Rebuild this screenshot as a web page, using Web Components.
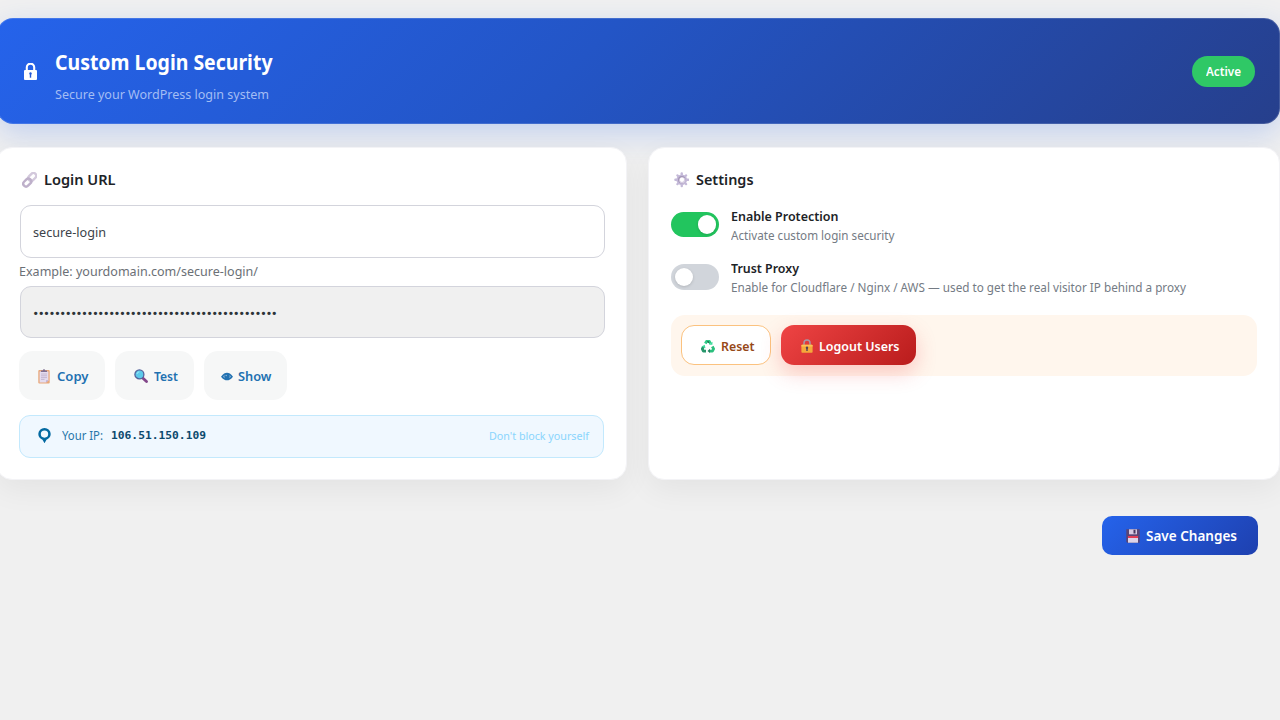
<!DOCTYPE html>
<html lang="en">
<head>
<meta charset="utf-8">
<title>Custom Login Security</title>
<style>
html,body{margin:0;height:100%;overflow:hidden;background:#f0f0f0}
body{font-family:"Noto Sans","Open Sans",sans-serif;color:#1d2327}
</style>
</head>
<body>
<login-app></login-app>
<script>
const define=(name,html,setup)=>{
  const t=document.createElement('template');t.innerHTML=html;
  customElements.define(name,class extends HTMLElement{
    constructor(){super();this.attachShadow({mode:'open'}).append(t.content.cloneNode(true));}
    connectedCallback(){setup&&setup(this,this.shadowRoot);}
  });
};

/* One line of text, condensed horizontally to a set width. */
define('fit-text',`<style>
:host{display:block;flex:none;white-space:nowrap;line-height:20px;height:20px}
span{display:inline-block;transform-origin:0 50%}
</style><span><slot></slot></span>`,(el,root)=>{
  const w=+el.getAttribute('w'),s=root.querySelector('span');
  el.style.width=w+'px';
  el.style.fontSize=(el.getAttribute('size')||13)+'px';
  el.style.fontWeight=el.getAttribute('weight')||400;
  const n=s.getBoundingClientRect().width;
  if(n)s.style.transform=`scaleX(${w/n})`;
});

const icons={
lock:['0 0 13 17','<path d="M2.8 8V4.3a3.7 3.7 0 0 1 7.4 0V8" fill="none" stroke="#fff" stroke-width="2.1"/><rect y="7" width="13" height="10" rx="1" fill="#fff"/><circle cx="6.5" cy="10.4" r="1.2" fill="#2459d6"/><path d="M5.8 11h1.4v3.7H5.8z" fill="#2459d6"/>'],
link:['0 0 16 16','<g fill="none" stroke-width="2.5"><rect x="6" y="2.2" width="9.2" height="5.8" rx="2.900" transform="rotate(-45 10.6 5.100)" stroke="#d3c9dc"/><rect x=".8" y="8" width="9.200" height="5.800" rx="2.900" transform="rotate(-45 5.400 10.900)" stroke="#beb0ca"/></g>'],
gear:['0 0 16 16','<g fill="#c4b9d8"><rect x="6.800" y=".3" width="2.400" height="15.400" rx="1"/><rect x=".3" y="6.800" width="15.400" height="2.400" rx="1"/><g transform="rotate(45 8 8)"><rect x="6.800" y=".5" width="2.400" height="15" rx="1"/><rect x=".5" y="6.800" width="15" height="2.400" rx="1"/></g><circle cx="8" cy="8" r="5.500"/></g><circle cx="8" cy="8" r="3.800" fill="#a294b5"/><circle cx="8.500" cy="8.500" r="3.200" fill="#d6cde2"/><circle cx="8.200" cy="8" r="2.200" fill="#fff"/>'],
copy:['0 0 12 15','<rect x=".3" y="1" width="11.4" height="13.5" rx="1" fill="#e9a779"/><path d="M1.6 2.4h8.8v8.8l-2.2 2.2H1.6z" fill="#e4dcef"/><path d="M10.4 11.2H8.2v2.2z" fill="#b9a8ce"/><path d="M3 2.9V1.4h1.8a1.2 1.2 0 0 1 2.4 0H9v1.5z" fill="#806f91"/><path d="M3 5h6M3 6.8h6M3 8.6h6M3 10.4h3.5" stroke="#bcafc9" stroke-width=".8"/>'],
search:['0 0 14 14','<path d="M8.7 8.9l3.8 3.6" stroke="#83478a" stroke-width="2.8" stroke-linecap="round"/><circle cx="5.4" cy="5.4" r="4.5" fill="#5cc9ea" stroke="#53629b" stroke-width="1.3"/><path d="M3 5a2.6 2.6 0 0 1 2.3-2.2" fill="none" stroke="#8de3f6" stroke-width="1.2"/>'],
eye:['0 0 12 9','<path d="M0 4.7C2.4 1.4 4 .8 6 .8s3.6.6 6 3.9C9.800 7.400 8 8.300 6 8.300S2.200 7.400 0 4.700z" fill="#2271b1"/><path d="M2.200 4.600Q2.700 3.500 3.500 3 3 4.700 3.700 6.200 2.800 5.900 2.200 4.600zM9.800 4.600Q9.300 3.500 8.500 3 9 4.700 8.300 6.200 9.200 5.900 9.800 4.600z" fill="#a9c8e0"/><circle cx="5.200" cy="3.500" r=".8" fill="#86b1d5"/>'],
pin:['0 0 13 16','<path fill-rule="evenodd" d="M6.500 0a6.200 6.200 0 0 1 6.200 6.200c0 3-1.800 4.900-4.200 6L6.500 15.700l-2-3.500C2.100 11.100.3 9.200.3 6.200A6.200 6.200 0 0 1 6.500 0zm0 2.600a3.700 3.700 0 1 0 0 7.400 3.700 3.700 0 0 0 0-7.400z" fill="#0369a1"/>'],
recycle:['0 0 14 13','<g stroke-linejoin="round"><path d="M4.300 3.600L5.700 1.300h2.500l1.300 2.200" fill="none" stroke="#2fcb86" stroke-width="2.800"/><path d="M7.800 4.800l3.600-.1.100-3z" fill="#3cdd9b"/><path d="M11.300 6.500l1.300 2.400-1.200 2.200H8.500" fill="none" stroke="#2bbf7d" stroke-width="2.800"/><path d="M9 8.800v4.200L6.500 11z" fill="#22805f"/><path d="M5 11.100H2.400L1.300 8.900l1.200-2.200" fill="none" stroke="#26966a" stroke-width="2.800"/><path d="M.5 6.500L3.700 4.700l.8 3.600z" fill="#3cdd9b"/><path d="M5.700 1.200h2.100l.8 1.200-1.300.7z" fill="#24634e"/></g>'],
goldlock:['0 0 12 14','<path d="M3 7V4a3 3 0 0 1 6 0v3" fill="none" stroke="#a698a7" stroke-width="1.500"/><rect x=".4" y="5.700" width="11.200" height="8" rx=".8" fill="#f5a83b"/><path d="M.4 6.500q0-.8.8-.8h9.600q.8 0 .8.800v1H.4z" fill="#ffc153"/><circle cx="6" cy="8.800" r="1.200" fill="#534057"/><path d="M5.300 9h1.400v3H5.300z" fill="#534057"/>'],
save:['0 0 14 14','<path d="M.3.300h13.400v13.400H1.300l-1-1z" fill="#594574"/><rect x="3" y=".3" width="8" height="5" fill="#d6cae1"/><rect x="7.500" y=".8" width="2" height="3.700" fill="#46365f"/><path d="M2 7.200h10v6.500H2z" fill="#ddd4e9"/><path d="M2 7h10v2H2z" fill="#e33d55"/>']
};
define('app-icon','<style>:host{display:block;flex:none}svg{display:block;width:100%;height:100%}</style><div style="width:100%;height:100%"></div>',(el,root)=>{
  const [box,body]=icons[el.getAttribute('name')];
  el.style.width=el.getAttribute('w')+'px';el.style.height=el.getAttribute('h')+'px';
  root.querySelector('div').innerHTML=`<svg viewBox="${box}" preserveAspectRatio="none">${body}</svg>`;
});

define('page-banner',`<style>
:host{display:flex;box-sizing:border-box;height:105.500px;padding:0 24px 0 26px;border-radius:16px;border:1px solid rgba(255,255,255,.14);background:linear-gradient(135deg,#2563eb,#2355c6 45%,#263f8c) border-box;box-shadow:0 10px 30px rgba(37,99,235,.22);color:#fff}
app-icon{margin:43.500px 18px 0 0}
.t{margin-top:33px}.s{margin-top:12px;color:#a3bdf4}
.pill{margin:36.200px 0 0 auto;width:63px;height:31.300px;box-sizing:border-box;border-radius:16px;background:#2fc866;padding:6.400px 0 0 14px}
</style><app-icon name="lock" w="13" h="17"></app-icon>
<div><fit-text class="t" w="217.500" size="20.500" weight="700">Custom Login Security</fit-text><fit-text class="s" w="214" size="13">Secure your WordPress login system</fit-text></div>
<div class="pill"><fit-text w="35" size="12" weight="600">Active</fit-text></div>`);

define('panel-card',`<style>
:host{display:block;box-sizing:border-box;height:333px;border:1px solid #f3f3f6;border-radius:16px;background:#fff;box-shadow:0 10px 30px rgba(0,0,0,.055)}
.head{display:flex;height:20px;margin:20.700px 0 16.400px}
::slotted([slot=icon]){margin:3px 7px 0 2.500px}
</style><div class="head"><slot name="icon"></slot><slot name="title"></slot></div><slot></slot>`);

define('text-field',`<style>
:host{display:block;box-sizing:border-box;height:52.500px;border:1px solid #d3d4dc;border-radius:11px;padding:16px 0 0 12.500px;color:#3c434a;background:#fff;margin:0 -.500px 0 .500px}
:host([readonly]){background:#f0f0f0;color:#2c3338}
</style><slot></slot>`);

define('soft-button',`<style>
:host{display:flex;box-sizing:border-box;height:49.500px;border-radius:14px;background:#f6f7f7;color:#2271b1;align-items:center}
::slotted(fit-text){position:relative;top:.500px}
::slotted(app-icon){position:relative;top:.500px}
</style><slot></slot>`);

define('ip-bar',`<style>
:host{display:flex;box-sizing:border-box;height:43px;border:1px solid #c3e9fd;border-radius:11px;background:#f0f8ff;color:#2775a8;padding:10.500px 14px 0 18px}
app-icon{margin:1.200px 11px 0 0}
.m{font-family:"DejaVu Sans Mono",monospace;color:#0c4a6e;margin-left:7.500px}
.n{margin-left:auto;color:#8ad5fd}
</style><app-icon name="pin" w="13" h="15.500"></app-icon><fit-text w="41" size="12.500">Your IP:</fit-text><fit-text class="m" w="95" size="11" weight="700">106.51.150.109</fit-text><fit-text class="n" w="100" size="11">Don't block yourself</fit-text>`);

define('toggle-row',`<style>
:host{display:flex;height:52.500px}
.track{flex:none;box-sizing:border-box;display:flex;width:47.500px;height:25.500px;border-radius:13px;background:#d1d5db;padding:3.500px;margin:4px 12px 0 0}
.knob{width:18.500px;height:18.500px;border-radius:50%;background:#fff;box-shadow:0 1px 3px rgba(0,0,0,.15)}
:host([on]) .track{background:#22c55e;justify-content:flex-end;padding-right:2.500px}
::slotted([slot=label]){color:#1d2327;margin-top:-1.300px}
::slotted([slot=note]){color:#747b84;margin-top:-1px}
</style><div class="track"><div class="knob"></div></div><div><slot name="label"></slot><slot name="note"></slot></div>`);

define('action-button',`<style>
:host{display:flex;box-sizing:border-box;align-items:center;height:40.500px;border-radius:13px;color:#fff}
:host([kind=reset]){background:#fff;border:1px solid #fbc27f;color:#964817}
:host([kind=danger]){background:linear-gradient(135deg,#ef4444,#b91c1c);box-shadow:0 8px 20px rgba(239,68,68,.25)}
:host([kind=save]){height:39.500px;border-radius:10px;background:linear-gradient(135deg,#2563eb,#1e40af)}
::slotted(fit-text){position:relative;top:1.500px}
::slotted(app-icon){position:relative;top:1.500px}
:host([kind=save]) ::slotted(*){top:1px}
</style><slot></slot>`);

define('login-app',`<style>
:host{display:block;box-sizing:border-box;height:720px;overflow:hidden;padding-top:18.400px}
page-banner{margin-left:-3px}
.cards{display:grid;grid-template-columns:631px 632px;column-gap:21px;margin:23.500px 0 0 -4px}
.l{padding:0 22px 0 22px}.r{padding:0 22.500px 0 22.400px}
.help{color:#6b7076;margin:3px 0 5px -.100px}
.btns{display:flex;gap:10px;margin:12.500px 0 14.500px}
.cp{width:86px;padding-left:19px}.ts{width:79px;padding-left:19px}.sh{width:83px;padding-left:17px}
.tg{margin-top:18.800px;height:107.200px}
.warn{display:flex;gap:10px;box-sizing:border-box;height:60.500px;border-radius:14px;background:#fff6ed;padding:9.500px 10px}
.foot{display:flex;justify-content:flex-end;padding:35.200px 22.500px 0 0}
</style>
<page-banner></page-banner>
<div class="cards">
<panel-card class="l"><app-icon slot="icon" name="link" w="15.500" h="15.500"></app-icon><fit-text slot="title" w="71.500" size="15" weight="600">Login URL</fit-text>
<text-field><fit-text w="73" size="13">secure-login</fit-text></text-field>
<fit-text class="help" w="239" size="12.800">Example: yourdomain.com/secure-login/</fit-text>
<text-field readonly><fit-text w="244" size="12.500" style="padding-top:.800px">•••••••••••••••••••••••••••••••••••••••••••••</fit-text></text-field>
<div class="btns">
<soft-button class="cp"><app-icon name="copy" w="12" h="15" style="margin-right:7px"></app-icon><fit-text w="31.500" weight="600">Copy</fit-text></soft-button>
<soft-button class="ts"><app-icon name="search" w="14" h="14" style="margin-right:6px"></app-icon><fit-text w="24" weight="600">Test</fit-text></soft-button>
<soft-button class="sh"><app-icon name="eye" w="12" h="9" style="margin-right:4.500px"></app-icon><fit-text w="33.500" weight="600">Show</fit-text></soft-button>
</div>
<ip-bar></ip-bar></panel-card>
<panel-card class="r"><app-icon slot="icon" name="gear" w="15.500" h="15.500"></app-icon><fit-text slot="title" w="57.500" size="15" weight="600">Settings</fit-text>
<div class="tg">
<toggle-row on><fit-text slot="label" w="107.500" size="12.500" weight="600">Enable Protection</fit-text><fit-text slot="note" w="163.500" size="12">Activate custom login security</fit-text></toggle-row>
<toggle-row><fit-text slot="label" w="68" size="12.500" weight="600">Trust Proxy</fit-text><fit-text slot="note" w="455" size="12">Enable for Cloudflare / Nginx / AWS — used to get the real visitor IP behind a proxy</fit-text></toggle-row>
</div>
<div class="warn">
<action-button kind="reset" style="width:90px;padding-left:18.500px"><app-icon name="recycle" w="14" h="13" style="margin-right:6px"></app-icon><fit-text w="33.500" weight="600">Reset</fit-text></action-button>
<action-button kind="danger" style="width:135px;padding-left:19.500px"><app-icon name="goldlock" w="12" h="14" style="margin-right:6.500px"></app-icon><fit-text w="80.500" weight="600">Logout Users</fit-text></action-button>
</div></panel-card>
</div>
<div class="foot"><action-button kind="save" style="width:155.500px;padding-left:23.500px"><app-icon name="save" w="14" h="14" style="margin-right:6.500px"></app-icon><fit-text w="91" size="14" weight="600">Save Changes</fit-text></action-button></div>`);
</script>
</body>
</html>
